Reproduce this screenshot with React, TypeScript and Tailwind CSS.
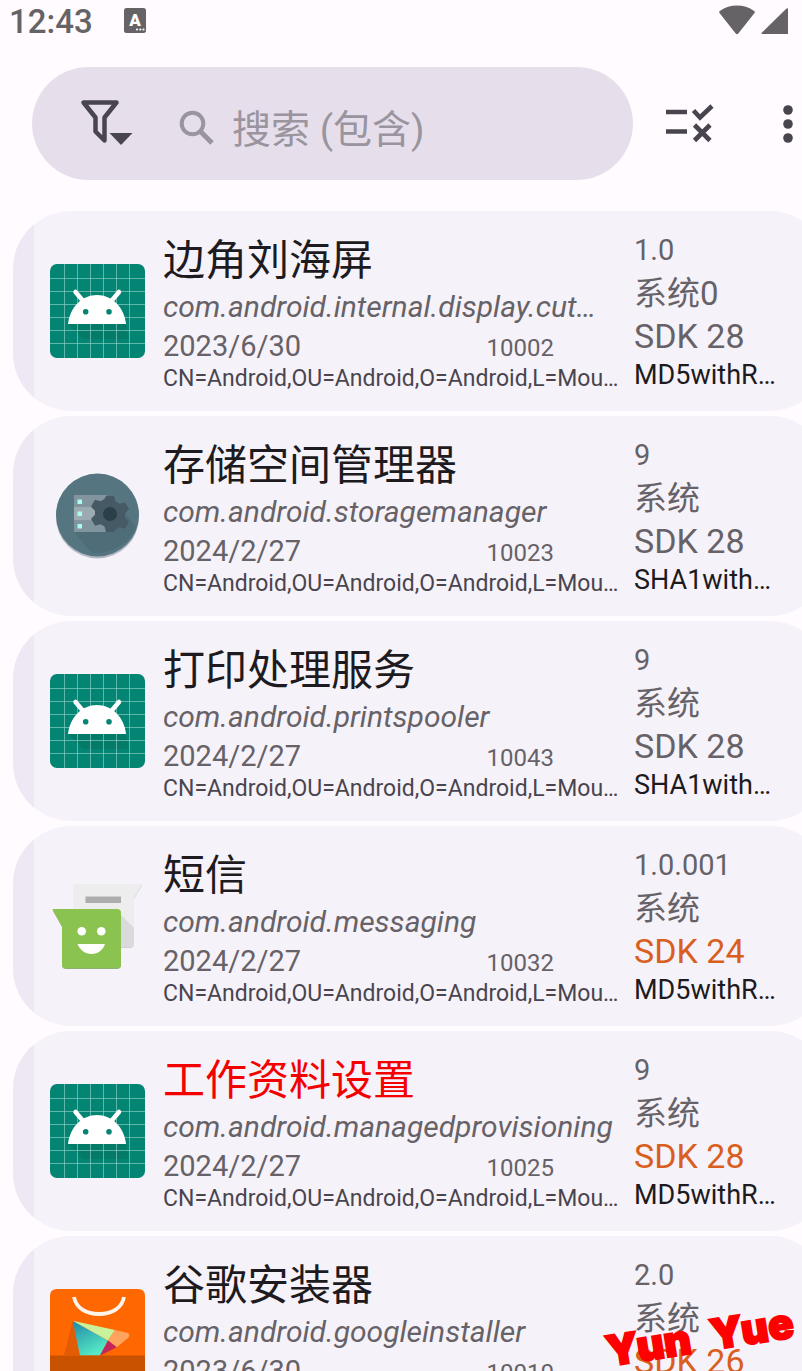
import React from "react";

type AppItem = {
  name: string;
  pkg: string;
  date: string;
  uid: string;
  cert: string;
  version: string;
  kind: string;
  sdk: string;
  algo: string;
  icon: React.ReactNode;
  frozen?: boolean;
  oldSdk?: boolean;
};

const AndroidIcon = () => (
  <svg viewBox="0 0 95 95" className="size-[95px]" aria-hidden="true">
    <rect width="95" height="94" rx="7" fill="#048573" />
    <path d="M18 60L33 75H79L76 60L70 44Z" fill="#047a69" />
    <path
      d="M14.500 0V94M27.500 0V94M40.500 0V94M53.500 0V94M66.500 0V94M79.500 0V94M0 14.500H95M0 27.500H95M0 40.500H95M0 53.500H95M0 66.500H95M0 79.500H95"
      stroke="#8fd3c8"
      strokeOpacity="0.65"
      strokeWidth="1"
    />
    <path d="M18 60C20 43 32 31 47 31S74 43 76 60Z" fill="#fff" />
    <path d="M25.500 28L34 38M69 28L60.500 38" stroke="#fff" strokeWidth="4.500" strokeLinecap="round" />
    <circle cx="35.700" cy="47.700" r="2.800" fill="#048573" />
    <circle cx="59" cy="47.700" r="2.800" fill="#048573" />
  </svg>
);

const StorageIcon = () => (
  <svg viewBox="0 0 95 95" className="size-[95px]" aria-hidden="true">
    <circle cx="47.500" cy="48" r="41.500" fill="#b3b7c1" />
    <circle cx="47.500" cy="46" r="41.500" fill="#557581" />
    <path d="M24 63L42 84C60 86 80 74 86 58L70 37Z" fill="#4e6d79" />
    <path d="M24 26H57V38H24ZM24 51H57V63H24Z" fill="#82949d" />
    <path d="M24 38H57V51H24Z" fill="#9caab1" />
    <path
      d="M56 28h8l1.500 5.500 4 2.300 5.500-1.500 4 7-4 4v4.500l4 4-4 7-5.500-1.500-4 2.300L64 64h-8l-1.500-5.500-4-2.300-5.500 1.500-4-7 4-4v-4l-4-4 4-7 5.500 1.500 4-2.300Z"
      fill="#455a64"
      transform="translate(0 -1)"
    />
    <circle cx="60" cy="45" r="7" fill="#2b3f48" />
    <path d="M27.500 30.500h4.500v4.500h-4.500zM27.500 42.500h4.500v4.500h-4.500zM27.500 55h4.500v4.500h-4.500z" fill="#a7ffeb" />
  </svg>
);

const MessagingIcon = () => (
  <svg viewBox="0 0 95 95" className="size-[95px]" aria-hidden="true">
    <path d="M27 6H92L84 20V65Q84 69 80 69H27Q23 69 23 65V10Q23 6 27 6Z" fill="#d0cfd3" />
    <path d="M27 5H92L84 19V64Q84 68 80 68H27Q23 68 23 64V9Q23 5 27 5Z" fill="#ededee" />
    <path d="M71 36L84 49V64Q84 68 80 68H71Z" fill="#dadadc" />
    <rect x="35.500" y="17.500" width="35.500" height="6.500" fill="#adadad" />
    <path d="M2.500 31H67Q71 31 71 35V86Q71 90 67 90H16Q12 90 12 86V48Z" fill="#8fae72" />
    <path d="M2.500 30H67Q71 30 71 34V85Q71 89 67 89H16Q12 89 12 85V47Z" fill="#8ac34f" />
    <circle cx="31.700" cy="52.300" r="4.300" fill="#fff" />
    <circle cx="51.300" cy="52.300" r="4.300" fill="#fff" />
    <path d="M27.500 65H55C53 71 48 75 41.500 75S30 71 27.500 65Z" fill="#fff" />
  </svg>
);

const InstallerIcon = () => (
  <svg viewBox="0 0 95 95" className="size-[95px]" aria-hidden="true">
    <defs>
      <linearGradient id="play" x1="0" y1="0" x2="0.5" y2="1">
        <stop offset="0" stopColor="#1f86a8" />
        <stop offset="1" stopColor="#55e8c4" />
      </linearGradient>
    </defs>
    <path d="M7 0H88Q95 0 95 7V95H0V7Q0 0 7 0Z" fill="#ff6700" />
    <path d="M22.700 32L14 66H30Z" fill="#e25c05" />
    <path d="M22.700 31.700L58 51.500L50 66.500H30Z" fill="url(#play)" />
    <path d="M22.700 31.700L65 41L58 51.500Z" fill="#c9f29b" />
    <path d="M65 41L78 44Q80.500 45.500 78 49L66.700 58.300L58 51.500Z" fill="#ffa45f" />
    <path d="M58 51.500L66.700 58.300L50 66.500Z" fill="#c2255c" />
    <path d="M0 66.500H95V88Q95 95 88 95H7Q0 95 0 88Z" fill="#c85200" />
    <path d="M24 8C26 19 36 25 49 25S72 19 74 8" fill="none" stroke="#fff4ea" strokeWidth="3.800" />
  </svg>
);

const CERT = "CN=Android,OU=Android,O=Android,L=Mou…";

const apps: AppItem[] = [
  {
    name: "边角刘海屏",
    pkg: "com.android.internal.display.cut…",
    date: "2023/6/30",
    uid: "10002",
    cert: CERT,
    version: "1.0",
    kind: "系统0",
    sdk: "SDK 28",
    algo: "MD5withR…",
    icon: <AndroidIcon />,
  },
  {
    name: "存储空间管理器",
    pkg: "com.android.storagemanager",
    date: "2024/2/27",
    uid: "10023",
    cert: CERT,
    version: "9",
    kind: "系统",
    sdk: "SDK 28",
    algo: "SHA1with…",
    icon: <StorageIcon />,
  },
  {
    name: "打印处理服务",
    pkg: "com.android.printspooler",
    date: "2024/2/27",
    uid: "10043",
    cert: CERT,
    version: "9",
    kind: "系统",
    sdk: "SDK 28",
    algo: "SHA1with…",
    icon: <AndroidIcon />,
  },
  {
    name: "短信",
    pkg: "com.android.messaging",
    date: "2024/2/27",
    uid: "10032",
    cert: CERT,
    version: "1.0.001",
    kind: "系统",
    sdk: "SDK 24",
    algo: "MD5withR…",
    icon: <MessagingIcon />,
    oldSdk: true,
  },
  {
    name: "工作资料设置",
    pkg: "com.android.managedprovisioning",
    date: "2024/2/27",
    uid: "10025",
    cert: CERT,
    version: "9",
    kind: "系统",
    sdk: "SDK 28",
    algo: "MD5withR…",
    icon: <AndroidIcon />,
    frozen: true,
    oldSdk: true,
  },
  {
    name: "谷歌安装器",
    pkg: "com.android.googleinstaller",
    date: "2023/6/30",
    uid: "10010",
    cert: CERT,
    version: "2.0",
    kind: "系统",
    sdk: "SDK 26",
    algo: "SHA1with…",
    icon: <InstallerIcon />,
    oldSdk: true,
  },
];

const StatusBar = () => (
  <div className="flex h-11 shrink-0 items-center pl-[9px] pr-[13px] text-[#666366]">
    <span className="text-[33px] leading-[44px] font-medium">12:43</span>
    <svg viewBox="0 0 22 25" className="ml-[31px] h-[25px] w-[22px] -mt-1" aria-hidden="true">
      <rect width="22" height="25" rx="2.500" fill="#666366" />
      <text x="11" y="17.500" textAnchor="middle" fontSize="17" fontWeight="900" fill="#fff">
        A
      </text>
      <circle cx="13" cy="21.500" r="1.100" fill="#fff" />
      <circle cx="16.300" cy="21.500" r="1.100" fill="#fff" />
      <circle cx="19.500" cy="21.500" r="1.100" fill="#fff" />
    </svg>
    <svg viewBox="0 0 72 32" className="ml-auto h-8 w-[72px] -mt-1" fill="#666366" aria-hidden="true">
      <path d="M2.500 9Q1.500 8 2.800 7C8 3 14 1.500 20 1.500S32 3 37.200 7Q38.500 8 37.500 9L21.300 29.500Q20 31 18.700 29.500Z" />
      <path d="M69.500 4.500Q71 3.500 71 5.500V30H46Q43.500 30 45 28.500Z" />
    </svg>
  </div>
);

const Toolbar = () => (
  <header className="mt-[23px] flex shrink-0 items-center pl-8">
    <div className="flex h-[113px] min-w-0 flex-1 items-center rounded-full bg-[#e6dfeb] pl-12">
      <button type="button" aria-label="筛选" className="shrink-0 pb-1">
        <svg viewBox="0 0 54 52" className="h-[52px] w-[54px]" aria-hidden="true">
          <path
            d="M3.500 6.500H36.500L24.500 21.500V44.500L15.500 35.500V21.500Z"
            fill="none"
            stroke="#49454f"
            strokeWidth="4.500"
            strokeLinejoin="round"
          />
          <path d="M29.500 37H52.500L41 49Z" fill="#49454f" />
        </svg>
      </button>
      <label className="ml-11 flex min-w-0 flex-1 items-center pt-2">
        <svg viewBox="0 0 38 38" className="size-[38px] shrink-0" fill="none" stroke="#9a949f" aria-hidden="true">
          <circle cx="14.500" cy="14.500" r="10.800" strokeWidth="4" />
          <path d="M22.500 22.500L34 34" strokeWidth="5" />
        </svg>
        <input
          type="text"
          aria-label="搜索"
          placeholder="搜索 (包含)"
          className="ml-4 w-full min-w-0 bg-transparent pt-1 text-[39px] leading-[56px] text-[#1d1b20] outline-none placeholder:text-[#9a949f]"
        />
      </label>
    </div>
    <button type="button" aria-label="选择" className="ml-8 shrink-0">
      <svg viewBox="0 0 50 44" className="h-[44px] w-[50px]" aria-hidden="true">
        <path d="M1 10H22M1 29.500H22" stroke="#49454f" strokeWidth="4.300" />
        <path d="M28.500 8.500L35 15.500L47 4M29.500 23L45 38.500M45 23L29.500 38.500" fill="none" stroke="#49454f" strokeWidth="4.600" />
      </svg>
    </button>
    <button type="button" aria-label="更多" className="ml-[63px] mr-1 shrink-0">
      <svg viewBox="0 0 20 44" className="h-[44px] w-5" fill="#49454f" aria-hidden="true">
        <circle cx="10" cy="8" r="4.800" />
        <circle cx="10" cy="22" r="4.800" />
        <circle cx="10" cy="36" r="4.800" />
      </svg>
    </button>
  </header>
);

const AppRow = ({ app }: { app: AppItem }) => (
  <li className="-mr-[26px] ml-[13px] flex shrink-0 overflow-hidden rounded-[58px] bg-[#f6f2f9]">
    <div className="w-[21px] shrink-0 bg-[#ede8f4]" />
    <div className="ml-4 flex shrink-0 items-center">{app.icon}</div>
    <div className="ml-[18px] min-w-0 flex-1 whitespace-nowrap pt-6 pb-[18px] text-[#666267]">
      <h2
        className={
          app.frozen
            ? "text-[42px] leading-[52px] text-[#f50000]"
            : "text-[42px] leading-[52px] text-[#1d1b20]"
        }
      >
        {app.name}
      </h2>
      <p className="text-[30px] leading-[40px] italic">{app.pkg}</p>
      <div className="flex items-center justify-between pr-20 leading-[38px]">
        <span className="text-[29px]">{app.date}</span>
        <span className="pt-1 text-[24px] leading-[34px]">{app.uid}</span>
      </div>
      <p className="text-[23px] leading-[28px] text-[#49454f]">{app.cert}</p>
    </div>
    <div className="w-[194px] shrink-0 whitespace-nowrap pt-5 text-[#666267]">
      <p className="text-[29px] leading-[38px]">{app.version}</p>
      <p className="pt-1 text-[33px] leading-[42px]">{app.kind}</p>
      <p
        className={
          app.oldSdk
            ? "text-[34px] leading-[42px] text-[#d95f1e]"
            : "text-[34px] leading-[42px]"
        }
      >
        {app.sdk}
      </p>
      <p className="text-[27px] leading-[36px] text-[#1d1b20]">{app.algo}</p>
    </div>
  </li>
);

const App = () => {
  return (
    <div className="relative flex h-screen flex-col overflow-hidden bg-[#fffbff] font-['Roboto','Noto_Sans_CJK_SC',sans-serif]">
      <StatusBar />
      <Toolbar />
      <ul className="mt-[31px] flex min-h-0 flex-1 flex-col gap-[5px] overflow-hidden">
        {apps.map((app) => (
          <AppRow key={app.pkg} app={app} />
        ))}
      </ul>
      <div className="absolute right-2 bottom-2 flex -rotate-9 gap-5 font-['Inter',sans-serif] text-[42px] leading-[52px] font-black whitespace-nowrap text-[#ff0000] [-webkit-text-stroke:2px_#ff0000]">
        <span>Yun</span>
        <span>Yue</span>
      </div>
    </div>
  );
};

export default App;
